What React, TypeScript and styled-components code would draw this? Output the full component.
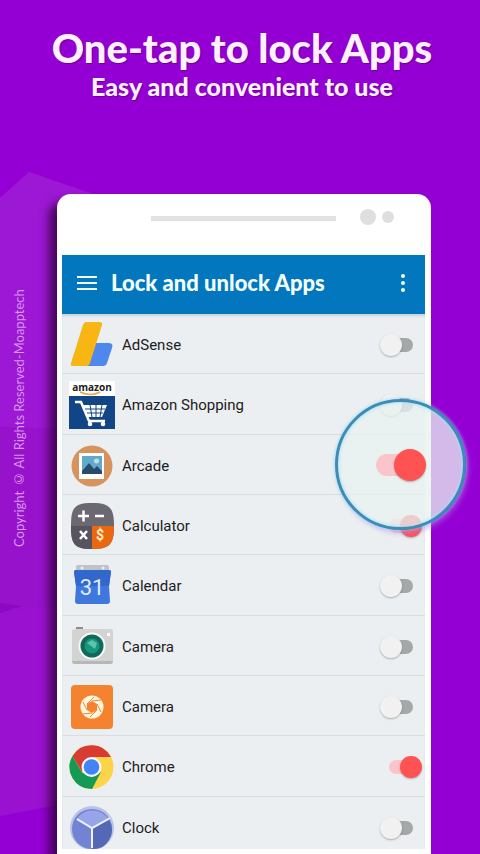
import React from "react";
import styled, { createGlobalStyle } from "styled-components";

const GlobalStyle = createGlobalStyle`
  * { box-sizing: border-box; }
  body { margin: 0; background: #9400d3; }
`;

const Page = styled.div`
  position: relative;
  display: flex;
  flex-direction: column;
  height: 100vh;
  overflow: hidden;
  background: #9400d3;
  font-family: Roboto, sans-serif;
`;

const Backdrop = styled.svg`
  position: absolute;
  left: 0;
  top: 0;
  width: 240px;
  height: 854px;
`;

const Hero = styled.header`
  height: 194px;
  flex: none;
  padding: 24px 0 0 4px;
  text-align: center;
  color: #fff0ff;
  font-family: Lato, sans-serif;
  font-weight: 900;
  text-shadow: 1px 1px 1px rgba(60, 0, 90, 0.5);
  white-space: nowrap;
`;

const Headline = styled.h1`
  margin: 0;
  font-size: 40px;
  line-height: 48px;
  font-weight: 900;
`;

const Tagline = styled.p`
  margin: 0;
  font-size: 25px;
  line-height: 28px;
`;

const Stage = styled.div`
  display: flex;
  flex: 1;
  min-height: 0;
  padding-right: 49px;
`;

const Margin = styled.aside`
  display: flex;
  flex: none;
  width: 57px;
  padding: 96px 0 0 10px;
`;

const Copyright = styled.small`
  height: 257px;
  writing-mode: vertical-rl;
  transform: rotate(180deg);
  color: #d795f0;
  font-family: Lato, sans-serif;
  font-size: 13px;
  line-height: 18px;
  white-space: nowrap;
`;

const Phone = styled.main`
  position: relative;
  display: flex;
  flex: 1;
  flex-direction: column;
  min-width: 0;
  padding: 0 6px 5px 5px;
  border-radius: 14px 14px 0 0;
  background: #fff;
  box-shadow: -8px 8px 10px rgba(50, 0, 60, 0.8);
`;

const SideButton = styled.span<{ $side: "left" | "right" }>`
  position: absolute;
  z-index: -1;
  width: 12px;
  background: #fff;
  ${(p) =>
    p.$side === "left"
      ? "left: -6px; top: 74px; height: 172px; border-radius: 5px 0 0 5px; box-shadow: -6px 2px 9px rgba(50, 0, 60, 0.65);"
      : "right: -6px; top: 310px; height: 67px; border-radius: 0 5px 5px 0;"}
`;

const PhoneTop = styled.div`
  display: flex;
  flex: none;
  align-items: center;
  justify-content: flex-end;
  height: 61px;
  padding: 0 31px 15px 0;
`;

const Speaker = styled.span`
  width: 185px;
  height: 5px;
  margin: 2px 24px 0 0;
  background: #e2e2e2;
`;

const Sensor = styled.span<{ $size: number }>`
  width: ${(p) => p.$size}px;
  height: ${(p) => p.$size}px;
  margin-left: ${(p) => (p.$size < 16 ? 6 : 0)}px;
  border-radius: 50%;
  background: #dfdfdf;
`;

const AppBar = styled.header`
  display: flex;
  flex: none;
  align-items: center;
  height: 59px;
  padding: 0 14px 3px;
  background: #0277bd;
  color: #f4ffff;
`;

const BarTitle = styled.h2`
  flex: 1;
  margin: 0;
  padding-left: 12px;
  font-family: Lato, sans-serif;
  font-size: 22px;
  line-height: 28px;
  font-weight: 900;
  white-space: nowrap;
`;

const BarButton = styled.button`
  display: flex;
  padding: 0;
  border: 0;
  background: none;
  color: inherit;
`;

const AppList = styled.ul`
  flex: 1;
  min-height: 0;
  margin: 0;
  padding: 0;
  overflow-y: auto;
  scrollbar-width: none;
  list-style: none;
  background: #ebeff1;
  box-shadow: inset 0 3px 3px -1px rgba(0, 60, 100, 0.16);
`;

const AppRow = styled.li`
  display: flex;
  align-items: center;
  height: 60px;
  padding: 2px 3px 0 6px;
  border-bottom: 1px solid #d9dddf;
  &:nth-child(3n + 2) {
    height: 61px;
  }
`;

const AppIcon = styled.svg`
  flex: none;
  width: 48px;
  height: 48px;
`;

const AppName = styled.label`
  flex: 1;
  padding-left: 6px;
  color: #1d2022;
  font-size: 15px;
  line-height: 24px;
`;

const Switch = styled.input<{ $large?: boolean }>`
  --thumb: ${(p) => (p.$large ? 32 : 22)}px;
  appearance: none;
  position: relative;
  flex: none;
  width: ${(p) => (p.$large ? 50 : 42)}px;
  height: var(--thumb);
  margin: 0;
  &::before {
    content: "";
    position: absolute;
    left: 9px;
    right: 9px;
    top: 4px;
    height: 14px;
    border-radius: 7px;
    background: #a5a8a9;
  }
  &::after {
    content: "";
    position: absolute;
    left: 0;
    top: 0;
    width: var(--thumb);
    height: var(--thumb);
    border-radius: 50%;
    background: #f1f1f1;
    box-shadow: 0 1px 2px rgba(0, 0, 0, 0.28);
  }
  &:checked::before {
    background: #f9c5ca;
    ${(p) => p.$large && "left: 0; top: 5px; height: 22px; border-radius: 11px;"}
  }
  &:checked::after {
    left: auto;
    right: 0;
    background: #ff5252;
  }
`;

const Lens = styled.div`
  position: absolute;
  right: -35px;
  top: 205px;
  display: flex;
  align-items: center;
  justify-content: flex-end;
  width: 131px;
  height: 131px;
  padding-right: 37px;
  border: 3px solid #3c8cb4;
  border-radius: 50%;
  background: rgba(232, 242, 239, 0.77);
  box-shadow:
    0 0 3px 1px rgba(130, 215, 255, 0.55),
    inset 0 0 3px 1px rgba(160, 225, 255, 0.8),
    3px 4px 5px rgba(180, 130, 230, 0.4);
`;

const AdSense = () => (
  <>
    <path d="M27 22h13q6 0 4 5l-5 15q-1 3-4 3H19z" fill="#4f87ee" />
    <path d="M18 1h13q4 0 3 3L22 42q-1 3-4 3H5q-3 0-2-3L15 4q1-3 3-3z" fill="#f7b614" />
  </>
);

const Amazon = () => (
  <>
    <path d="M1 0h46v16H1z" fill="#fff" />
    <path d="M1 15h46v33H1z" fill="#124586" />
    <text x="24" y="10" textAnchor="middle" fontFamily="Open Sans, sans-serif" fontWeight="700" fontSize="10" fill="#222">amazon</text>
    <path d="M12 11q11 5 20 0" stroke="#e9a64a" strokeWidth="1.5" fill="none" />
    <path d="M7 21h6l8 19h16" fill="none" stroke="#fff" strokeWidth="2.5" />
    <path d="M15 24h24l-5 12H20z" fill="#fff" />
    <path d="M17 28h20M19 32h16M22 24l2 12M28 24v12M34 24l-2 12" stroke="#124586" strokeWidth="1" />
    <circle cx="22" cy="43" r="2.3" fill="#fff" />
    <circle cx="35" cy="43" r="2.3" fill="#fff" />
  </>
);

const Arcade = () => (
  <>
    <circle cx="24" cy="24" r="20.5" fill="#d7935d" />
    <path d="M11 11h25v26H11z" fill="#fff" />
    <path d="M14 14h20v18H14z" fill="#62a9ce" />
    <circle cx="28.5" cy="19" r="2.5" fill="#b8e2db" />
    <path d="M14 29l7-8 5 6 3-3 5 5v3H14z" fill="#294b6b" />
  </>
);

const Calculator = () => (
  <>
    <defs>
      <clipPath id="calc-shape">
        <path d="M24 1c18 0 22 5 22 23s-4 23-22 23S3 42 3 24 6 1 24 1z" />
      </clipPath>
    </defs>
    <g clipPath="url(#calc-shape)">
      <path d="M2 0h46v48H2z" fill="#6b6872" />
      <path d="M2 24h22v24H2z" fill="#57545f" />
      <path d="M24 24h24v24H24z" fill="#ea6811" />
    </g>
    <path d="M10 14h11M15.5 8.500v11M27 14h9M12 29l7 8M19 29l-7 8" stroke="#fff" strokeWidth="2.5" />
    <text x="32" y="38" textAnchor="middle" fontFamily="Roboto, sans-serif" fontWeight="700" fontSize="14" fill="#fff1c9">$</text>
  </>
);

const Calendar = () => (
  <>
    <path d="M8 5q0-2 2-2h29q2 0 2 2v8H8z" fill="#bfc2c6" />
    <circle cx="14" cy="6" r="1.5" fill="#eee" />
    <circle cx="35" cy="6" r="1.5" fill="#eee" />
    <path d="M6 10q0-2 2-2h33q2 0 2 2l-2 14 1 15q0 3-3 3H10q-3 0-3-3l1-15z" fill="#3f78dc" />
    <path d="M6 10q0-2 2-2h33q2 0 2 2l-2 14H8z" fill="#3267cb" />
    <text x="24" y="33" textAnchor="middle" fontFamily="Roboto, sans-serif" fontSize="22" fill="#dfeaff">31</text>
  </>
);

const CameraGrey = () => (
  <>
    <path d="M8 4h7v4H8z" fill="#8a8d8c" />
    <rect x="4" y="6" width="41" height="35" rx="3" fill="#d3d4d2" />
    <path d="M4 38h41q0 3-3 3H7q-3 0-3-3z" fill="#b6b8b7" />
    <circle cx="24" cy="23" r="13.5" fill="#f5faf8" />
    <circle cx="24" cy="23" r="11.5" fill="#11685d" />
    <circle cx="24" cy="23" r="7.5" fill="#17967d" />
    <path d="M19 20l5-3 5 3-2 6z" fill="#5cc6aa" />
    <path d="M39 10h3v3h-3z" fill="#fff" />
  </>
);

const CameraOrange = () => (
  <>
    <rect x="3" y="2" width="42" height="44" rx="4" fill="#f5822f" />
    <circle cx="24" cy="24" r="11.5" fill="#fff6df" />
    <path d="M24 18l5 3v6l-5 3-5-3v-6z" fill="#f5822f" />
    <path d="M24 18l9-1M29 21l4 8M29 27l-7 7M24 30l-9 1M19 27l-4-8M19 21l7-7" stroke="#f5822f" strokeWidth="1" />
  </>
);

const Chrome = () => (
  <>
    <circle cx="23.5" cy="24" r="22" fill="#fdd347" />
    <path d="M4.500 13A22 22 0 0 1 43 14H24L14 29z" fill="#d83b32" />
    <path d="M4.500 13L14 29.500 24 34 33 29 24 46A22 22 0 0 1 4.500 13z" fill="#159a55" />
    <circle cx="23.5" cy="24" r="10" fill="#f4f6f8" />
    <circle cx="23.5" cy="24" r="7.8" fill="#4284f3" />
  </>
);

const Clock = () => (
  <>
    <circle cx="24" cy="24" r="22" fill="#b9c2e4" />
    <circle cx="24" cy="25" r="20" fill="#7183d2" />
    <path d="M24 25L8 16A19 19 0 0 1 41 16z" fill="#98a4e8" />
    <path d="M24 25l17-9A19 19 0 0 1 24 45z" fill="#5568b8" />
    <path d="M9 15l15 9 18-10M24 24v20" stroke="#eef1ff" strokeWidth="2" fill="none" />
  </>
);

type App = { id: string; name: string; Art: React.FC; locked?: boolean; magnified?: boolean };

const apps: App[] = [
  { id: "adsense", name: "AdSense", Art: AdSense },
  { id: "amazon", name: "Amazon Shopping", Art: Amazon },
  { id: "arcade", name: "Arcade", Art: Arcade, locked: true, magnified: true },
  { id: "calculator", name: "Calculator", Art: Calculator, locked: true },
  { id: "calendar", name: "Calendar", Art: Calendar },
  { id: "camera", name: "Camera", Art: CameraGrey },
  { id: "camera-alt", name: "Camera", Art: CameraOrange },
  { id: "chrome", name: "Chrome", Art: Chrome, locked: true },
  { id: "clock", name: "Clock", Art: Clock },
];

export default function App() {
  return (
    <Page>
      <GlobalStyle />
      <Backdrop viewBox="0 0 240 854" aria-hidden="true">
        <path d="M0 198L29 172 110 200V795L0 816z" fill="#9a12d0" />
        <path d="M0 198L29 172 110 200V430L0 427z" fill="#9c18d4" />
        <path d="M0 427L57 430V605L0 612z" fill="#9612cb" />
        <path d="M0 603l22 3L0 613z" fill="#8c09c4" />
      </Backdrop>
      <Hero>
        <Headline>One-tap to lock Apps</Headline>
        <Tagline>Easy and convenient to use</Tagline>
      </Hero>
      <Stage>
        <Margin>
          <Copyright>Copyright © All Rights Reserved-Moapptech</Copyright>
        </Margin>
        <Phone>
          <SideButton $side="left" />
          <SideButton $side="right" />
          <PhoneTop>
            <Speaker />
            <Sensor $size={16} />
            <Sensor $size={12} />
          </PhoneTop>
          <AppBar>
            <BarButton aria-label="Menu">
              <svg width="23" height="20" viewBox="0 0 23 20" stroke="currentColor" strokeWidth="2">
                <path d="M1 4h20M1 10h20M1 16h20" />
              </svg>
            </BarButton>
            <BarTitle>Lock and unlock Apps</BarTitle>
            <BarButton aria-label="More options">
              <svg width="16" height="20" viewBox="0 0 16 20" fill="currentColor">
                <circle cx="8" cy="3" r="2" />
                <circle cx="8" cy="10" r="2" />
                <circle cx="8" cy="17" r="2" />
              </svg>
            </BarButton>
          </AppBar>
          <AppList>
            {apps.map(({ id, name, Art, locked, magnified }) => (
              <AppRow key={id}>
                <AppIcon viewBox="0 0 48 48" aria-hidden="true">
                  <Art />
                </AppIcon>
                <AppName htmlFor={id}>{name}</AppName>
                {!magnified && <Switch id={id} type="checkbox" defaultChecked={locked} />}
              </AppRow>
            ))}
          </AppList>
          <Lens>
            <Switch id="arcade" type="checkbox" defaultChecked $large />
          </Lens>
        </Phone>
      </Stage>
    </Page>
  );
}
